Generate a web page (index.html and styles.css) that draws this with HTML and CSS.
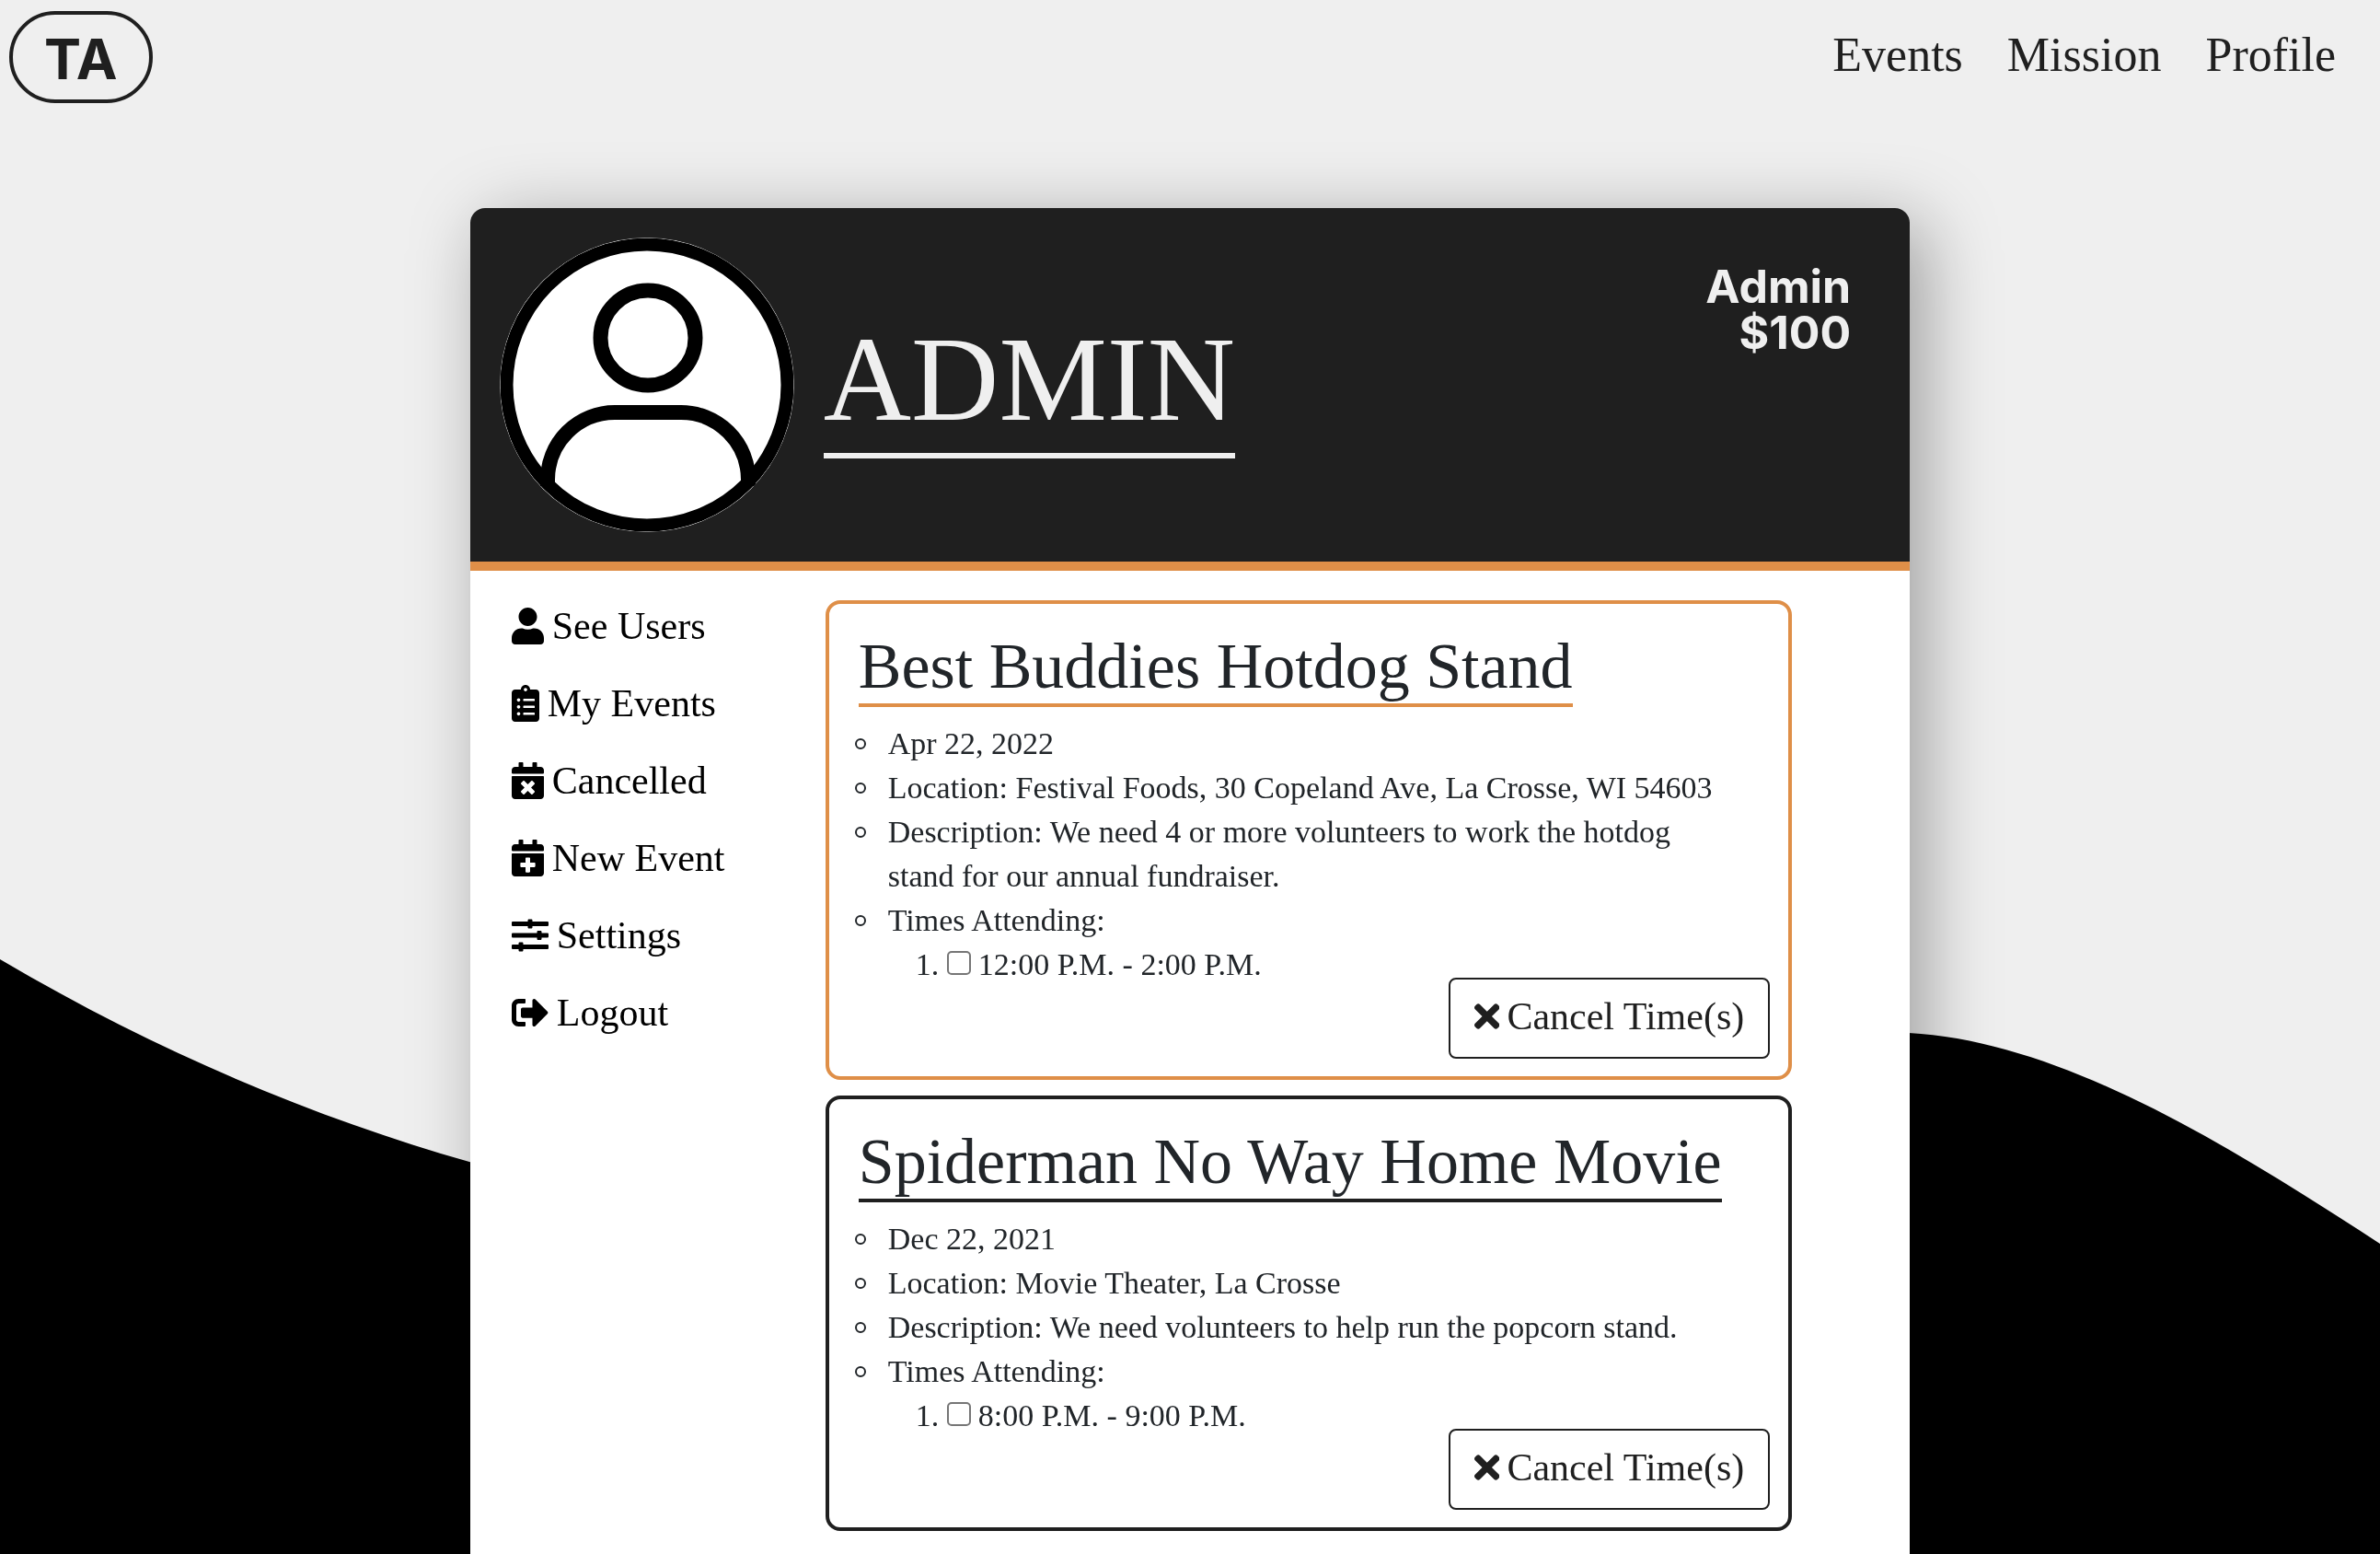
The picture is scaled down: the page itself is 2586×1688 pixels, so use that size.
FILE: index.html
```html
<!DOCTYPE html>
<html lang="en">
<head>
<meta charset="utf-8">
<meta name="viewport" content="width=device-width, initial-scale=1">
<title>TA - Admin</title>
<link rel="stylesheet" href="styles.css">
</head>
<body>
<svg class="wave" viewBox="0 0 2586 646" aria-hidden="true">
  <path d="M0 0C180 106 350 174 510 220C1000 380 1560 80 2074 80C2240 89 2420 201 2586 309V646H0Z"/>
</svg>

<header class="topbar">
  <a class="logo" href="#">TA</a>
  <nav class="topnav">
    <a href="#">Events</a>
    <a href="#">Mission</a>
    <a href="#">Profile</a>
  </nav>
</header>

<main class="panel">
  <section class="profile">
    <svg class="avatar" viewBox="0 0 320 320" role="img" aria-label="Profile picture">
      <clipPath id="disc"><circle cx="160" cy="160" r="160"/></clipPath>
      <g clip-path="url(#disc)">
        <circle cx="160" cy="160" r="160" fill="#fff"/>
        <g fill="none" stroke="#000">
          <circle cx="160" cy="160" r="152.5" stroke-width="14"/>
          <circle cx="161" cy="109" r="51.5" stroke-width="16"/>
          <path stroke-width="16" d="M52 270V263A73 73 0 0 1 125 190H197A73 73 0 0 1 270 263V270"/>
        </g>
      </g>
    </svg>
    <h1 class="name">ADMIN</h1>
    <p class="rank">Admin<br>$100</p>
  </section>

  <div class="content">
    <nav class="sidebar">
      <a href="#"><svg class="icon" viewBox="0 0 448 512"><path d="M224 256c70.7 0 128-57.3 128-128S294.7 0 224 0 96 57.3 96 128s57.3 128 128 128zm89.6 32h-16.7c-22.2 10.2-46.9 16-72.9 16s-50.6-5.8-72.9-16h-16.7C60.2 288 0 348.2 0 422.4V464c0 26.5 21.5 48 48 48h352c26.5 0 48-21.5 48-48v-41.6c0-74.2-60.2-134.4-134.4-134.4z"/></svg>See Users</a>
      <a href="#"><svg class="icon" viewBox="0 0 384 512"><path d="M336 64h-80c0-35.3-28.7-64-64-64s-64 28.7-64 64H48C21.5 64 0 85.5 0 112v352c0 26.5 21.5 48 48 48h288c26.5 0 48-21.5 48-48V112c0-26.5-21.5-48-48-48zM96 424c-13.3 0-24-10.7-24-24s10.7-24 24-24 24 10.7 24 24-10.7 24-24 24zm0-96c-13.3 0-24-10.7-24-24s10.7-24 24-24 24 10.7 24 24-10.7 24-24 24zm0-96c-13.3 0-24-10.7-24-24s10.7-24 24-24 24 10.7 24 24-10.7 24-24 24zm96-192c13.3 0 24 10.7 24 24s-10.7 24-24 24-24-10.7-24-24 10.7-24 24-24zm128 368c0 4.4-3.6 8-8 8H168c-4.4 0-8-3.6-8-8v-16c0-4.4 3.6-8 8-8h144c4.4 0 8 3.6 8 8v16zm0-96c0 4.4-3.6 8-8 8H168c-4.4 0-8-3.6-8-8v-16c0-4.4 3.6-8 8-8h144c4.4 0 8 3.6 8 8v16zm0-96c0 4.4-3.6 8-8 8H168c-4.4 0-8-3.6-8-8v-16c0-4.4 3.6-8 8-8h144c4.4 0 8 3.6 8 8v16z"/></svg>My Events</a>
      <a href="#"><svg class="icon" viewBox="0 0 448 512"><path d="M436 160H12c-6.6 0-12-5.4-12-12v-36c0-26.5 21.5-48 48-48h48V12c0-6.6 5.4-12 12-12h40c6.6 0 12 5.4 12 12v52h128V12c0-6.6 5.4-12 12-12h40c6.6 0 12 5.4 12 12v52h48c26.5 0 48 21.5 48 48v36c0 6.6-5.4 12-12 12zM12 192h424c6.6 0 12 5.4 12 12v260c0 26.5-21.5 48-48 48H48c-26.5 0-48-21.5-48-48V204c0-6.6 5.4-12 12-12zm257.3 160l48.1-48.1c4.7-4.7 4.7-12.3 0-17l-28.3-28.3c-4.7-4.7-12.3-4.7-17 0L224 306.7l-48.1-48.1c-4.7-4.7-12.3-4.7-17 0l-28.3 28.3c-4.7 4.7-4.7 12.3 0 17l48.1 48.1-48.1 48.1c-4.7 4.7-4.7 12.3 0 17l28.3 28.3c4.7 4.7 12.3 4.7 17 0l48.1-48.1 48.1 48.1c4.7 4.7 12.3 4.7 17 0l28.3-28.3c4.7-4.7 4.7-12.3 0-17L269.3 352z"/></svg>Cancelled</a>
      <a href="#"><svg class="icon" viewBox="0 0 448 512"><path d="M436 160H12c-6.6 0-12-5.4-12-12v-36c0-26.5 21.5-48 48-48h48V12c0-6.6 5.4-12 12-12h40c6.6 0 12 5.4 12 12v52h128V12c0-6.6 5.4-12 12-12h40c6.6 0 12 5.4 12 12v52h48c26.5 0 48 21.5 48 48v36c0 6.6-5.4 12-12 12zM12 192h424c6.6 0 12 5.4 12 12v260c0 26.5-21.5 48-48 48H48c-26.5 0-48-21.5-48-48V204c0-6.6 5.4-12 12-12zm316 140c0-6.6-5.4-12-12-12h-60v-60c0-6.6-5.4-12-12-12h-40c-6.6 0-12 5.4-12 12v60h-60c-6.6 0-12 5.4-12 12v40c0 6.6 5.4 12 12 12h60v60c0 6.6 5.4 12 12 12h40c6.6 0 12-5.4 12-12v-60h60c6.6 0 12-5.4 12-12v-40z"/></svg>New Event</a>
      <a href="#"><svg class="icon" viewBox="0 0 512 512"><path d="M496 384H160v-16c0-8.800-7.200-16-16-16h-32c-8.800 0-16 7.200-16 16v16H16c-8.800 0-16 7.200-16 16v32c0 8.800 7.200 16 16 16h80v16c0 8.800 7.200 16 16 16h32c8.800 0 16-7.200 16-16v-16h336c8.800 0 16-7.200 16-16v-32c0-8.800-7.200-16-16-16zm0-160h-80v-16c0-8.800-7.200-16-16-16h-32c-8.800 0-16 7.200-16 16v16H16c-8.800 0-16 7.200-16 16v32c0 8.800 7.200 16 16 16h336v16c0 8.800 7.200 16 16 16h32c8.800 0 16-7.200 16-16v-16h80c8.800 0 16-7.200 16-16v-32c0-8.800-7.200-16-16-16zm0-160H288V48c0-8.800-7.200-16-16-16h-32c-8.800 0-16 7.200-16 16v16H16C7.200 64 0 71.200 0 80v32c0 8.800 7.200 16 16 16h208v16c0 8.800 7.200 16 16 16h32c8.800 0 16-7.200 16-16v-16h208c8.800 0 16-7.200 16-16V80c0-8.800-7.200-16-16-16z"/></svg>Settings</a>
      <a href="#"><svg class="icon" viewBox="0 0 512 512"><path d="M497 273L329 441c-15 15-41 4.500-41-17v-96H152c-13.300 0-24-10.700-24-24v-96c0-13.300 10.700-24 24-24h136V88c0-21.400 25.900-32 41-17l168 168c9.300 9.400 9.300 24.600 0 34zM192 436v-40c0-6.600-5.400-12-12-12H96c-17.700 0-32-14.300-32-32V160c0-17.700 14.300-32 32-32h84c6.600 0 12-5.400 12-12V76c0-6.600-5.400-12-12-12H96c-53 0-96 43-96 96v192c0 53 43 96 96 96h84c6.600 0 12-5.400 12-12z"/></svg>Logout</a>
    </nav>

    <div class="events">
      <form class="event event--active">
        <h2 class="event-title">Best Buddies Hotdog Stand</h2>
        <ul class="details">
          <li>Apr 22, 2022</li>
          <li>Location: Festival Foods, 30 Copeland Ave, La Crosse, WI 54603</li>
          <li>Description: We need 4 or more volunteers to work the hotdog stand for our annual fundraiser.</li>
          <li>Times Attending:
            <ol class="times">
              <li><label><input class="tick" type="checkbox">12:00 P.M. - 2:00 P.M.</label></li>
            </ol>
          </li>
        </ul>
        <button class="cancel" type="button"><svg class="icon" viewBox="0 0 352 512"><path d="M242.720 256l100.070-100.070c12.280-12.280 12.280-32.190 0-44.480l-22.240-22.240c-12.280-12.280-32.190-12.280-44.480 0L176 189.280 75.930 89.210c-12.280-12.280-32.190-12.280-44.480 0L9.210 111.450c-12.280 12.280-12.280 32.190 0 44.480L109.280 256 9.210 356.070c-12.280 12.280-12.280 32.190 0 44.480l22.240 22.240c12.280 12.280 32.200 12.280 44.480 0L176 322.720l100.070 100.070c12.280 12.280 32.200 12.280 44.480 0l22.240-22.240c12.280-12.280 12.280-32.190 0-44.480L242.720 256z"/></svg>Cancel Time(s)</button>
      </form>

      <form class="event">
        <h2 class="event-title">Spiderman No Way Home Movie</h2>
        <ul class="details">
          <li>Dec 22, 2021</li>
          <li>Location: Movie Theater, La Crosse</li>
          <li>Description: We need volunteers to help run the popcorn stand.</li>
          <li>Times Attending:
            <ol class="times">
              <li><label><input class="tick" type="checkbox">8:00 P.M. - 9:00 P.M.</label></li>
            </ol>
          </li>
        </ul>
        <button class="cancel" type="button"><svg class="icon" viewBox="0 0 352 512"><path d="M242.720 256l100.070-100.070c12.280-12.280 12.280-32.190 0-44.480l-22.240-22.240c-12.280-12.280-32.190-12.280-44.480 0L176 189.280 75.930 89.210c-12.280-12.280-32.190-12.280-44.480 0L9.210 111.450c-12.280 12.280-12.280 32.190 0 44.480L109.280 256 9.210 356.070c-12.280 12.280-12.280 32.190 0 44.480l22.240 22.240c12.280 12.280 32.200 12.280 44.480 0L176 322.720l100.070 100.070c12.280 12.280 32.200 12.280 44.480 0l22.240-22.240c12.280-12.280 12.280-32.190 0-44.480L242.720 256z"/></svg>Cancel Time(s)</button>
      </form>
    </div>
  </div>
</main>
</body>
</html>
```
FILE: styles.css
```css
:root {
  --ink: #1f1f1f;
  --text: #212529;
  --paper: #efefef;
  --accent: #df8f48;
}

*,
*::before {
  box-sizing: border-box;
}

body {
  margin: 0;
  min-height: 100vh;
  display: flex;
  flex-direction: column;
  background: var(--paper);
  color: var(--text);
  font-family: "Liberation Serif", serif;
  font-size: 34px;
  line-height: 48px;
}

h1, h2, p, ul, ol {
  margin: 0;
  padding: 0;
  font-weight: 400;
}

a {
  color: inherit;
  text-decoration: none;
}

/* Black hill behind the page, pinned to the window's bottom edge */
.wave {
  position: fixed;
  bottom: 0;
  left: 0;
  z-index: -1;
  width: 100%;
}

.topbar {
  display: flex;
  align-items: center;
  justify-content: space-between;
  padding: 12px 48px 0 10px;
  color: var(--ink);
}

.logo {
  padding: 4px 34px 0;
  border: 4px solid var(--ink);
  border-radius: 50px;
  font-family: Inter, sans-serif;
  font-size: 60px;
  font-weight: 700;
  line-height: 88px;
}

.topnav {
  display: flex;
  gap: 48px;
  padding-bottom: 4px;
  font-size: 52px;
}

.panel {
  flex: 1;
  width: 60.5%;
  margin: 114px auto 0;
  border-radius: 16px 16px 0 0;
  background: #fff;
  box-shadow: 16px 16px 80px rgba(0, 0, 0, 0.35);
}

.profile {
  display: flex;
  align-items: center;
  gap: 32px;
  padding: 32px 64px 32px 32px;
  border-bottom: 10px solid var(--accent);
  border-radius: 16px 16px 0 0;
  background: var(--ink);
  color: var(--paper);
}

.avatar {
  width: 320px;
  height: 320px;
}

.name {
  padding-bottom: 6px;
  border-bottom: 6px solid var(--paper);
  font-size: 132px;
  line-height: 148px;
}

.rank {
  align-self: flex-start;
  margin-left: auto;
  padding-top: 28px;
  font-family: Inter, sans-serif;
  font-size: 50px;
  font-weight: 700;
  line-height: 50px;
  text-align: right;
}

.content {
  display: grid;
  grid-template-columns: 386px 1fr;
  padding-right: 128px;
}

.icon {
  height: 40px;
  fill: currentColor;
}

.sidebar {
  padding: 18px 0 0 45px;
  color: #000;
  font-size: 42px;
}

.sidebar a {
  display: flex;
  align-items: center;
  gap: 9px;
  height: 84px;
}

.events {
  display: flex;
  flex-direction: column;
  gap: 17px;
  padding-top: 32px;
}

.event {
  display: flex;
  flex-direction: column;
  align-items: flex-start;
  padding: 28px 20px 19px 32px;
  border: 4px solid var(--ink);
  border-radius: 16px;
}

.event-title {
  margin-bottom: 16px;
  border-bottom: 4px solid var(--ink);
  font-size: 70px;
  line-height: 80px;
}

.event--active,
.event--active .event-title {
  border-color: var(--accent);
}

.details {
  padding: 0 32px;
  list-style: none;
}

.details > li::before {
  content: "";
  display: inline-block;
  width: 12px;
  height: 12px;
  margin: 0 24px 0 -36px;
  border: 2px solid currentColor;
  border-radius: 50%;
  vertical-align: 5px;
}

.times {
  padding-left: 64px;
  list-style: decimal;
}

.tick {
  appearance: none;
  width: 26px;
  height: 26px;
  margin: 0 8px 0 0;
  border: 2px solid #767676;
  border-radius: 5px;
  background: #fff;
}

.cancel {
  display: flex;
  align-items: center;
  align-self: flex-end;
  gap: 8px;
  height: 88px;
  margin-top: -10px;
  padding: 0 26px 4px;
  border: 2px solid var(--ink);
  border-radius: 8px;
  background: #fff;
  color: var(--ink);
  font-family: inherit;
  font-size: 42px;
}
```
